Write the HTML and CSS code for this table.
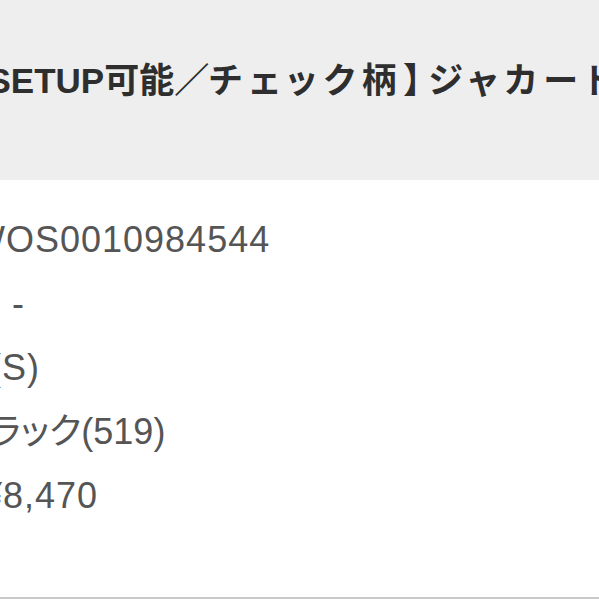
FILE: index.html
```html
<!DOCTYPE html>
<html lang="ja">
<head>
<meta charset="utf-8">
<link rel="stylesheet" href="styles.css">
</head>
<body>
<div class="page">
  <header class="title-bar">
    <h1 class="title">【SETUP可能／<span class="title-tail">チェック柄】ジャカードワンピース</span></h1>
  </header>
  <section class="details">
    <div class="row row-code">WOS0010984544</div>
    <div class="row row-dash">-</div>
    <div class="row row-size">F(S)</div>
    <div class="row row-color">ブラック(519)</div>
    <div class="row row-price">¥8,470</div>
  </section>
</div>
</body>
</html>
```

FILE: styles.css
```css
html, body {
  margin: 0;
  padding: 0;
  background: #ffffff;
}

.page {
  width: 599px;
  height: 599px;
  box-sizing: border-box;
  overflow: hidden;
  display: flex;
  flex-direction: column;
  border-bottom: 2px solid #c9c9c9;
  font-family: "Liberation Sans", "Noto Sans CJK JP", sans-serif;
  font-feature-settings: "palt";
}

.title-bar {
  height: 180px;
  flex: none;
  background: #eeeeee;
  box-sizing: border-box;
  padding-top: 56px;
  overflow: hidden;
}

.title {
  margin: 0 0 0 -30px;
  font-size: 35px;
  line-height: 50px;
  font-weight: bold;
  color: #2e2e2e;
  white-space: nowrap;
  letter-spacing: 0;
}

.title-tail {
  letter-spacing: 7px;
}

.details {
  padding-top: 28px;
  display: flex;
  flex-direction: column;
}

.row {
  height: 64px;
  line-height: 64px;
  font-size: 36px;
  letter-spacing: 1px;
  color: #555555;
  white-space: nowrap;
}

.row-code { margin-left: -29px; }
.row-dash { margin-left: 12px; }
.row-size { margin-left: -34px; }
.row-color { margin-left: -42px; letter-spacing: 0; }
.row-price { margin-left: -18px; }
```
